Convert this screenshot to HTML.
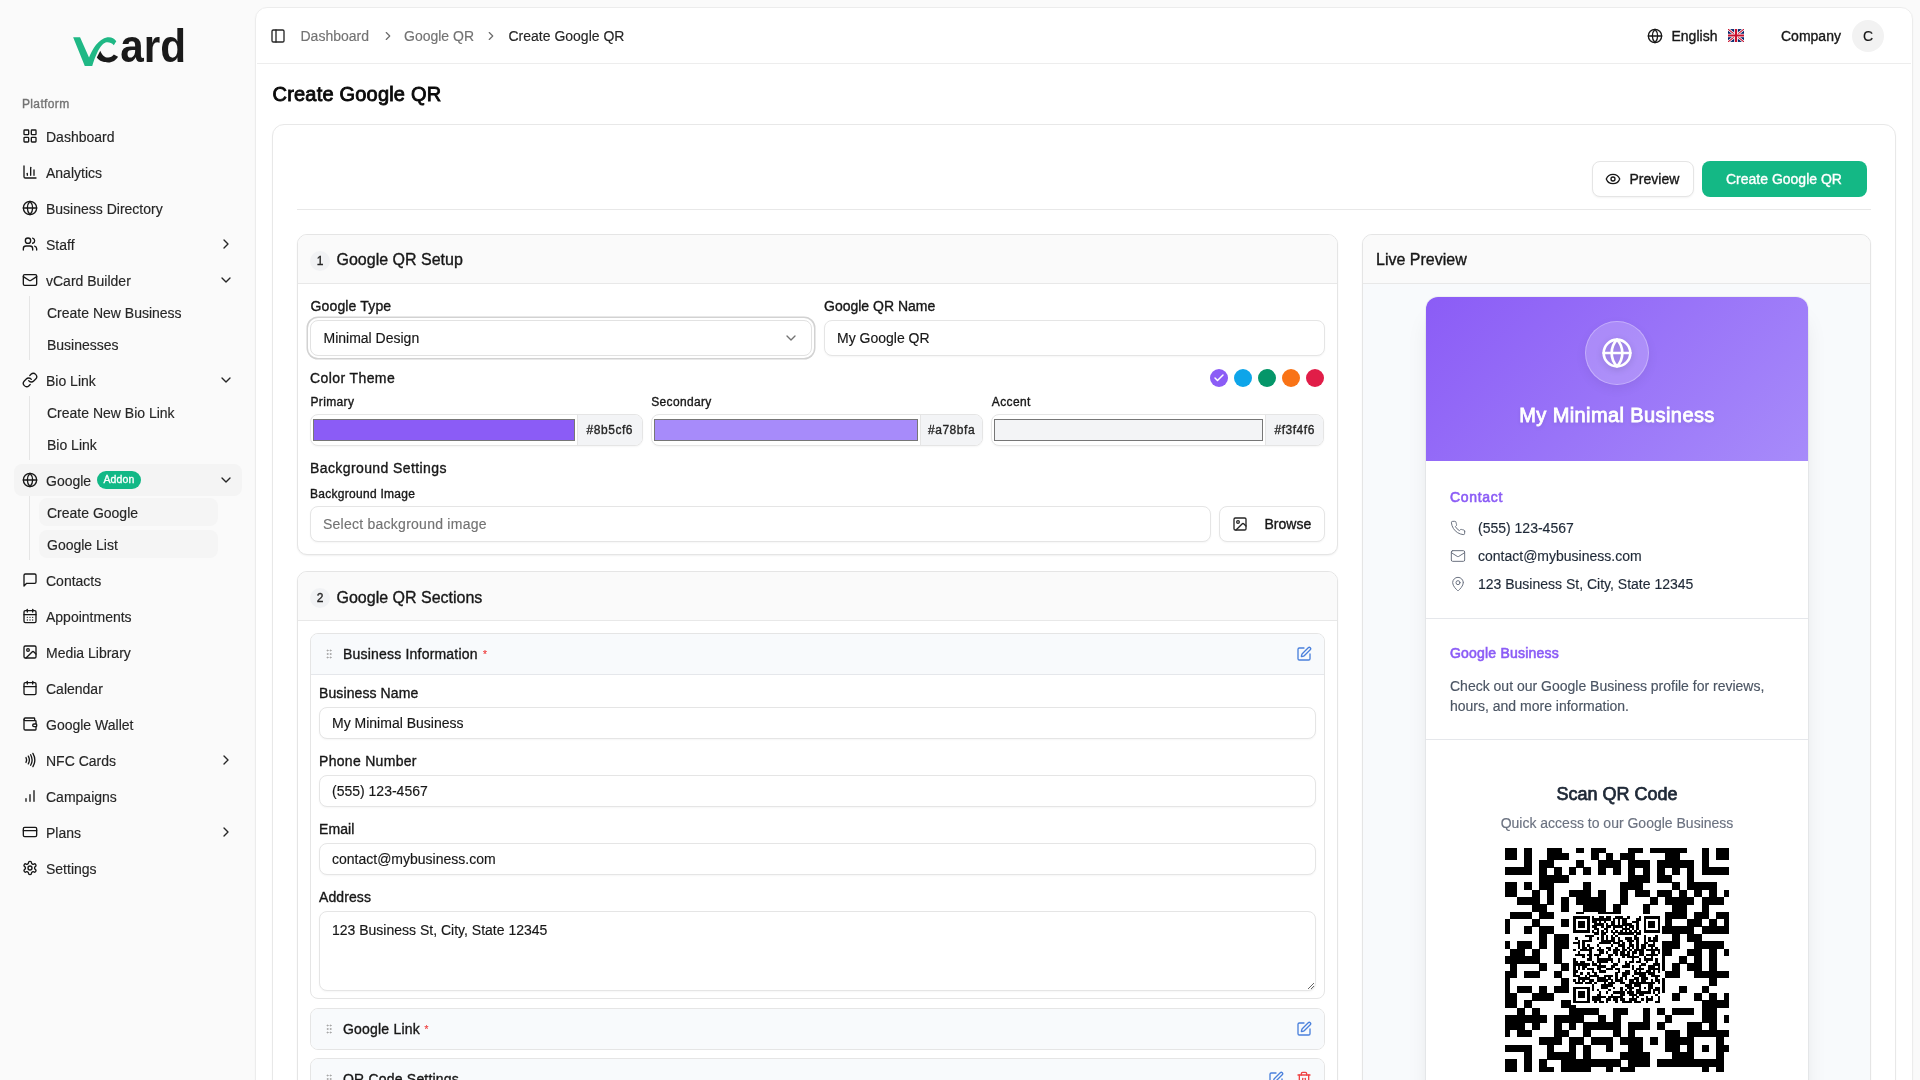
<!DOCTYPE html>
<html><head><meta charset="utf-8"><title>Create Google QR</title>
<style>
html,body{margin:0;padding:0;}
html{background:#fafafa;}body{width:1920px;height:1080px;overflow:hidden;position:relative;will-change:transform;font-family:"Liberation Sans",sans-serif;color:#171717;}
.t{position:absolute;white-space:nowrap;}
.b{position:absolute;box-sizing:border-box;}
.i{position:absolute;display:block;}
</style></head><body>

<svg class="i" style="left:60px;top:20px" width="140" height="56" viewBox="0 0 1920 768">
<path d="M505,515 L552,420 C575,478 610,514 660,514 C694,514 718,500 738,472 L796,503 C768,550 722,582 660,582 C598,582 540,565 505,515 Z" fill="#1a1a1a"/>
<path d="M180,235 L275,235 L398,515 C445,400 525,262 650,238 C700,230 742,250 772,292 L738,345 C712,318 682,306 650,306 C582,310 522,385 442,630 L340,630 Z" fill="#1fb885"/>

<text x="826" y="575" font-family="Liberation Sans" font-weight="700" font-size="640" fill="#1a1a1a" textLength="902" lengthAdjust="spacingAndGlyphs">ard</text>
</svg>
<div class="t" style="left:22px;top:97.84px;font-size:12px;line-height:12px;-webkit-text-stroke-width:0.35px;color:#737373;letter-spacing:0.35px;">Platform</div>
<div class="b" style="left:14px;top:464px;width:228px;height:32px;background:#f4f4f4;border-radius:8px;"></div>
<div class="b" style="left:39px;top:498px;width:179px;height:28px;background:#f5f5f5;border-radius:8px;"></div>
<div class="b" style="left:39px;top:530px;width:179px;height:28px;background:#f5f5f5;border-radius:8px;"></div>
<svg class="i" style="left:22px;top:128px;" width="16" height="16" viewBox="0 0 24 24" fill="none" stroke="#171717" stroke-width="2" stroke-linecap="round" stroke-linejoin="round"><rect width="7" height="7" x="3" y="3" rx="1"/><rect width="7" height="7" x="14" y="3" rx="1"/><rect width="7" height="7" x="14" y="14" rx="1"/><rect width="7" height="7" x="3" y="14" rx="1"/></svg>
<div class="t" style="left:46px;top:129.65px;font-size:14px;line-height:14px;-webkit-text-stroke-width:0.15px;color:#262626;">Dashboard</div>
<svg class="i" style="left:22px;top:164px;" width="16" height="16" viewBox="0 0 24 24" fill="none" stroke="#171717" stroke-width="2" stroke-linecap="round" stroke-linejoin="round"><path d="M3 3v16a2 2 0 0 0 2 2h16"/><path d="M18 17V9"/><path d="M13 17V5"/><path d="M8 17v-3"/></svg>
<div class="t" style="left:46px;top:165.65px;font-size:14px;line-height:14px;-webkit-text-stroke-width:0.15px;color:#262626;">Analytics</div>
<svg class="i" style="left:22px;top:200px;" width="16" height="16" viewBox="0 0 24 24" fill="none" stroke="#171717" stroke-width="2" stroke-linecap="round" stroke-linejoin="round"><circle cx="12" cy="12" r="10"/><path d="M12 2a14.5 14.5 0 0 0 0 20 14.5 14.5 0 0 0 0-20"/><path d="M2 12h20"/></svg>
<div class="t" style="left:46px;top:201.65px;font-size:14px;line-height:14px;-webkit-text-stroke-width:0.15px;color:#262626;">Business Directory</div>
<svg class="i" style="left:22px;top:236px;" width="16" height="16" viewBox="0 0 24 24" fill="none" stroke="#171717" stroke-width="2" stroke-linecap="round" stroke-linejoin="round"><path d="M16 21v-2a4 4 0 0 0-4-4H6a4 4 0 0 0-4 4v2"/><circle cx="9" cy="7" r="4"/><path d="M22 21v-2a4 4 0 0 0-3-3.87"/><path d="M16 3.13a4 4 0 0 1 0 7.75"/></svg>
<div class="t" style="left:46px;top:237.65px;font-size:14px;line-height:14px;-webkit-text-stroke-width:0.15px;color:#262626;">Staff</div>
<svg class="i" style="left:218px;top:236px;" width="16" height="16" viewBox="0 0 24 24" fill="none" stroke="#262626" stroke-width="2" stroke-linecap="round" stroke-linejoin="round"><path d="m9 18 6-6-6-6"/></svg>
<svg class="i" style="left:22px;top:272px;" width="16" height="16" viewBox="0 0 24 24" fill="none" stroke="#171717" stroke-width="2" stroke-linecap="round" stroke-linejoin="round"><rect width="20" height="16" x="2" y="4" rx="2"/><path d="m22 7-8.97 5.7a1.94 1.94 0 0 1-2.06 0L2 7"/></svg>
<div class="t" style="left:46px;top:273.65px;font-size:14px;line-height:14px;-webkit-text-stroke-width:0.15px;color:#262626;">vCard Builder</div>
<svg class="i" style="left:218px;top:272px;" width="16" height="16" viewBox="0 0 24 24" fill="none" stroke="#262626" stroke-width="2" stroke-linecap="round" stroke-linejoin="round"><path d="m6 9 6 6 6-6"/></svg>
<svg class="i" style="left:22px;top:372px;" width="16" height="16" viewBox="0 0 24 24" fill="none" stroke="#171717" stroke-width="2" stroke-linecap="round" stroke-linejoin="round"><path d="M10 13a5 5 0 0 0 7.54.54l3-3a5 5 0 0 0-7.07-7.07l-1.72 1.71"/><path d="M14 11a5 5 0 0 0-7.54-.54l-3 3a5 5 0 0 0 7.07 7.07l1.71-1.71"/></svg>
<div class="t" style="left:46px;top:373.65px;font-size:14px;line-height:14px;-webkit-text-stroke-width:0.15px;color:#262626;">Bio Link</div>
<svg class="i" style="left:218px;top:372px;" width="16" height="16" viewBox="0 0 24 24" fill="none" stroke="#262626" stroke-width="2" stroke-linecap="round" stroke-linejoin="round"><path d="m6 9 6 6 6-6"/></svg>
<svg class="i" style="left:22px;top:472px;" width="16" height="16" viewBox="0 0 24 24" fill="none" stroke="#171717" stroke-width="2" stroke-linecap="round" stroke-linejoin="round"><circle cx="12" cy="12" r="10"/><path d="M12 2a14.5 14.5 0 0 0 0 20 14.5 14.5 0 0 0 0-20"/><path d="M2 12h20"/></svg>
<div class="t" style="left:46px;top:473.65px;font-size:14px;line-height:14px;-webkit-text-stroke-width:0.15px;color:#262626;">Google</div>
<svg class="i" style="left:218px;top:472px;" width="16" height="16" viewBox="0 0 24 24" fill="none" stroke="#262626" stroke-width="2" stroke-linecap="round" stroke-linejoin="round"><path d="m6 9 6 6 6-6"/></svg>
<svg class="i" style="left:22px;top:572px;" width="16" height="16" viewBox="0 0 24 24" fill="none" stroke="#171717" stroke-width="2" stroke-linecap="round" stroke-linejoin="round"><path d="M21 15a2 2 0 0 1-2 2H7l-4 4V5a2 2 0 0 1 2-2h14a2 2 0 0 1 2 2z"/></svg>
<div class="t" style="left:46px;top:573.65px;font-size:14px;line-height:14px;-webkit-text-stroke-width:0.15px;color:#262626;">Contacts</div>
<svg class="i" style="left:22px;top:608px;" width="16" height="16" viewBox="0 0 24 24" fill="none" stroke="#171717" stroke-width="2" stroke-linecap="round" stroke-linejoin="round"><path d="M8 2v4"/><path d="M16 2v4"/><rect width="18" height="18" x="3" y="4" rx="2"/><path d="M3 10h18"/><path d="M8 14h.01"/><path d="M12 14h.01"/><path d="M16 14h.01"/><path d="M8 18h.01"/><path d="M12 18h.01"/><path d="M16 18h.01"/></svg>
<div class="t" style="left:46px;top:609.65px;font-size:14px;line-height:14px;-webkit-text-stroke-width:0.15px;color:#262626;">Appointments</div>
<svg class="i" style="left:22px;top:644px;" width="16" height="16" viewBox="0 0 24 24" fill="none" stroke="#171717" stroke-width="2" stroke-linecap="round" stroke-linejoin="round"><rect width="18" height="18" x="3" y="3" rx="2" ry="2"/><circle cx="9" cy="9" r="2"/><path d="m21 15-3.086-3.086a2 2 0 0 0-2.828 0L6 21"/></svg>
<div class="t" style="left:46px;top:645.65px;font-size:14px;line-height:14px;-webkit-text-stroke-width:0.15px;color:#262626;">Media Library</div>
<svg class="i" style="left:22px;top:680px;" width="16" height="16" viewBox="0 0 24 24" fill="none" stroke="#171717" stroke-width="2" stroke-linecap="round" stroke-linejoin="round"><path d="M8 2v4"/><path d="M16 2v4"/><rect width="18" height="18" x="3" y="4" rx="2"/><path d="M3 10h18"/></svg>
<div class="t" style="left:46px;top:681.65px;font-size:14px;line-height:14px;-webkit-text-stroke-width:0.15px;color:#262626;">Calendar</div>
<svg class="i" style="left:22px;top:716px;" width="16" height="16" viewBox="0 0 24 24" fill="none" stroke="#171717" stroke-width="2" stroke-linecap="round" stroke-linejoin="round"><path d="M19 7V4a1 1 0 0 0-1-1H5a2 2 0 0 0 0 4h15a1 1 0 0 1 1 1v4h-3a2 2 0 0 0 0 4h3a1 1 0 0 0 1-1v-2a1 1 0 0 0-1-1"/><path d="M3 5v14a2 2 0 0 0 2 2h15a1 1 0 0 0 1-1v-4"/></svg>
<div class="t" style="left:46px;top:717.65px;font-size:14px;line-height:14px;-webkit-text-stroke-width:0.15px;color:#262626;">Google Wallet</div>
<svg class="i" style="left:22px;top:752px;" width="16" height="16" viewBox="0 0 24 24" fill="none" stroke="#171717" stroke-width="2" stroke-linecap="round" stroke-linejoin="round"><path d="M6 8.32a7.43 7.43 0 0 1 0 7.36"/><path d="M9.46 6.21a11.76 11.76 0 0 1 0 11.58"/><path d="M12.91 4.1a15.91 15.91 0 0 1 .01 15.8"/><path d="M16.37 2a20.16 20.16 0 0 1 0 20"/></svg>
<div class="t" style="left:46px;top:753.65px;font-size:14px;line-height:14px;-webkit-text-stroke-width:0.15px;color:#262626;">NFC Cards</div>
<svg class="i" style="left:218px;top:752px;" width="16" height="16" viewBox="0 0 24 24" fill="none" stroke="#262626" stroke-width="2" stroke-linecap="round" stroke-linejoin="round"><path d="m9 18 6-6-6-6"/></svg>
<svg class="i" style="left:22px;top:788px;" width="16" height="16" viewBox="0 0 24 24" fill="none" stroke="#171717" stroke-width="2" stroke-linecap="round" stroke-linejoin="round"><path d="M12 20V10"/><path d="M18 20V4"/><path d="M6 20v-4"/></svg>
<div class="t" style="left:46px;top:789.65px;font-size:14px;line-height:14px;-webkit-text-stroke-width:0.15px;color:#262626;">Campaigns</div>
<svg class="i" style="left:22px;top:824px;" width="16" height="16" viewBox="0 0 24 24" fill="none" stroke="#171717" stroke-width="2" stroke-linecap="round" stroke-linejoin="round"><rect width="20" height="14" x="2" y="5" rx="2"/><line x1="2" x2="22" y1="10" y2="10"/></svg>
<div class="t" style="left:46px;top:825.65px;font-size:14px;line-height:14px;-webkit-text-stroke-width:0.15px;color:#262626;">Plans</div>
<svg class="i" style="left:218px;top:824px;" width="16" height="16" viewBox="0 0 24 24" fill="none" stroke="#262626" stroke-width="2" stroke-linecap="round" stroke-linejoin="round"><path d="m9 18 6-6-6-6"/></svg>
<svg class="i" style="left:22px;top:860px;" width="16" height="16" viewBox="0 0 24 24" fill="none" stroke="#171717" stroke-width="2" stroke-linecap="round" stroke-linejoin="round"><path d="M12.22 2h-.44a2 2 0 0 0-2 2v.18a2 2 0 0 1-1 1.73l-.43.25a2 2 0 0 1-2 0l-.15-.08a2 2 0 0 0-2.73.73l-.22.38a2 2 0 0 0 .73 2.73l.15.1a2 2 0 0 1 1 1.72v.51a2 2 0 0 1-1 1.74l-.15.09a2 2 0 0 0-.73 2.73l.22.38a2 2 0 0 0 2.73.73l.15-.08a2 2 0 0 1 2 0l.43.25a2 2 0 0 1 1 1.73V20a2 2 0 0 0 2 2h.44a2 2 0 0 0 2-2v-.18a2 2 0 0 1 1-1.73l.43-.25a2 2 0 0 1 2 0l.15.08a2 2 0 0 0 2.73-.73l.22-.39a2 2 0 0 0-.73-2.73l-.15-.08a2 2 0 0 1-1-1.74v-.5a2 2 0 0 1 1-1.74l.15-.09a2 2 0 0 0 .73-2.73l-.22-.38a2 2 0 0 0-2.73-.73l-.15.08a2 2 0 0 1-2 0l-.43-.25a2 2 0 0 1-1-1.73V4a2 2 0 0 0-2-2z"/><circle cx="12" cy="12" r="3"/></svg>
<div class="t" style="left:46px;top:861.65px;font-size:14px;line-height:14px;-webkit-text-stroke-width:0.15px;color:#262626;">Settings</div>
<div class="b" style="left:97px;top:471px;width:44px;height:18px;background:#12b886;border-radius:9px;"></div>
<div class="t" style="left:97.00px;width:44px;text-align:center;top:474.41px;font-size:10.5px;line-height:10.5px;-webkit-text-stroke-width:0.15px;color:#ffffff;-webkit-text-stroke-width:0.3px;letter-spacing:0.15px;">Addon</div>
<div class="b" style="left:29px;top:296px;width:1px;height:64px;background:#e5e5e5;"></div>
<div class="b" style="left:29px;top:396px;width:1px;height:64px;background:#e5e5e5;"></div>
<div class="b" style="left:29px;top:496px;width:1px;height:64px;background:#e5e5e5;"></div>
<div class="t" style="left:47px;top:305.65px;font-size:14px;line-height:14px;-webkit-text-stroke-width:0.15px;color:#262626;">Create New Business</div>
<div class="t" style="left:47px;top:337.65px;font-size:14px;line-height:14px;-webkit-text-stroke-width:0.15px;color:#262626;">Businesses</div>
<div class="t" style="left:47px;top:405.65px;font-size:14px;line-height:14px;-webkit-text-stroke-width:0.15px;color:#262626;">Create New Bio Link</div>
<div class="t" style="left:47px;top:437.65px;font-size:14px;line-height:14px;-webkit-text-stroke-width:0.15px;color:#262626;">Bio Link</div>
<div class="t" style="left:47px;top:505.65px;font-size:14px;line-height:14px;-webkit-text-stroke-width:0.15px;color:#262626;">Create Google</div>
<div class="t" style="left:47px;top:537.65px;font-size:14px;line-height:14px;-webkit-text-stroke-width:0.15px;color:#262626;">Google List</div>
<div class="b" style="left:255px;top:7px;width:1658px;height:1193px;background:#fff;border:1px solid #ececec;border-radius:12px;box-shadow:0 1px 2px rgba(0,0,0,0.04);"></div>
<div class="b" style="left:257px;top:63px;width:1654px;height:1px;background:#ededed;"></div>
<svg class="i" style="left:270px;top:28px;" width="16" height="16" viewBox="0 0 24 24" fill="none" stroke="#262626" stroke-width="2" stroke-linecap="round" stroke-linejoin="round"><rect width="18" height="18" x="3" y="3" rx="2"/><path d="M9 3v18"/></svg>
<div class="t" style="left:300.5px;top:29.15px;font-size:14px;line-height:14px;-webkit-text-stroke-width:0.15px;color:#737373;">Dashboard</div>
<svg class="i" style="left:381.2px;top:29px;" width="14" height="14" viewBox="0 0 24 24" fill="none" stroke="#6b6b6b" stroke-width="2" stroke-linecap="round" stroke-linejoin="round"><path d="m9 18 6-6-6-6"/></svg>
<div class="t" style="left:404px;top:29.15px;font-size:14px;line-height:14px;-webkit-text-stroke-width:0.15px;color:#737373;">Google QR</div>
<svg class="i" style="left:484.2px;top:29px;" width="14" height="14" viewBox="0 0 24 24" fill="none" stroke="#6b6b6b" stroke-width="2" stroke-linecap="round" stroke-linejoin="round"><path d="m9 18 6-6-6-6"/></svg>
<div class="t" style="left:508.5px;top:29.15px;font-size:14px;line-height:14px;-webkit-text-stroke-width:0.15px;color:#262626;">Create Google QR</div>
<svg class="i" style="left:1647px;top:28px;" width="16" height="16" viewBox="0 0 24 24" fill="none" stroke="#171717" stroke-width="2" stroke-linecap="round" stroke-linejoin="round"><circle cx="12" cy="12" r="10"/><path d="M12 2a14.5 14.5 0 0 0 0 20 14.5 14.5 0 0 0 0-20"/><path d="M2 12h20"/></svg>
<div class="t" style="left:1671.5px;top:29.15px;font-size:14px;line-height:14px;-webkit-text-stroke-width:0.35px;color:#171717;">English</div>
<svg class="i" style="left:1728px;top:29px" width="16" height="13" viewBox="0 0 60 48">
<rect width="60" height="48" fill="#012169"/>
<path d="M0 0L60 48M60 0L0 48" stroke="#fff" stroke-width="10"/>
<path d="M0 0L60 48M60 0L0 48" stroke="#C8102E" stroke-width="4"/>
<path d="M30 0v48M0 24h60" stroke="#fff" stroke-width="14"/>
<path d="M30 0v48M0 24h60" stroke="#C8102E" stroke-width="8"/>
</svg>
<div class="t" style="left:1781px;top:29.15px;font-size:14px;line-height:14px;-webkit-text-stroke-width:0.35px;color:#171717;">Company</div>
<div class="b" style="left:1852px;top:20px;width:32px;height:32px;background:#f2f2f2;border-radius:50%;"></div>
<div class="t" style="left:1852.00px;width:32px;text-align:center;top:29.15px;font-size:14px;line-height:14px;-webkit-text-stroke-width:0.15px;color:#171717;">C</div>
<div class="t" style="left:272.5px;top:84.07px;font-size:20px;line-height:20px;-webkit-text-stroke-width:0.15px;color:#0a0a0a;-webkit-text-stroke-width:0.85px;letter-spacing:0.2px;">Create Google QR</div>
<div class="b" style="left:272px;top:124px;width:1624px;height:1176px;background:#fff;border:1px solid #e8e8e8;border-radius:12px;box-shadow:0 1px 2px rgba(0,0,0,0.03);"></div>
<div class="b" style="left:1592px;top:161px;width:102px;height:36px;background:#fff;border:1px solid #e5e5e5;border-radius:8px;box-shadow:0 1px 2px rgba(0,0,0,0.05);"></div>
<svg class="i" style="left:1605px;top:171px;" width="16" height="16" viewBox="0 0 24 24" fill="none" stroke="#171717" stroke-width="2" stroke-linecap="round" stroke-linejoin="round"><path d="M2.062 12.348a1 1 0 0 1 0-.696 10.75 10.75 0 0 1 19.876 0 1 1 0 0 1 0 .696 10.75 10.75 0 0 1-19.876 0"/><circle cx="12" cy="12" r="3"/></svg>
<div class="t" style="left:1629.5px;top:172.15px;font-size:14px;line-height:14px;-webkit-text-stroke-width:0.35px;color:#171717;">Preview</div>
<div class="b" style="left:1702px;top:161px;width:165px;height:36px;background:#14b885;border-radius:8px;"></div>
<div class="t" style="left:1726px;top:172.15px;font-size:14px;line-height:14px;-webkit-text-stroke-width:0.35px;color:#ffffff;">Create Google QR</div>
<div class="b" style="left:297px;top:209px;width:1574px;height:1px;background:#e8e8e8;"></div>
<div class="b" style="left:297px;top:234px;width:1041px;height:321px;background:#fff;border:1px solid #e5e5e5;border-radius:10px;box-shadow:0 1px 2px rgba(0,0,0,0.06);overflow:hidden;"></div>
<div class="b" style="left:298px;top:235px;width:1039px;height:49px;background:#fafafa;border-radius:9px 9px 0 0;"></div>
<div class="b" style="left:298px;top:283px;width:1039px;height:1px;background:#e8e8e8;"></div>
<div class="b" style="left:310px;top:250.5px;width:20px;height:20.0px;background:#f1f2f4;border-radius:50%;"></div>
<div class="t" style="left:310.00px;width:20px;text-align:center;top:254.84px;font-size:12px;line-height:12px;-webkit-text-stroke-width:0.35px;color:#262626;">1</div>
<div class="t" style="left:336.5px;top:251.66px;font-size:16px;line-height:16px;-webkit-text-stroke-width:0.35px;color:#171717;">Google QR Setup</div>
<div class="t" style="left:310.5px;top:299.15px;font-size:14px;line-height:14px;-webkit-text-stroke-width:0.35px;color:#171717;letter-spacing:0.15px;">Google Type</div>
<div class="t" style="left:824px;top:299.15px;font-size:14px;line-height:14px;-webkit-text-stroke-width:0.35px;color:#171717;">Google QR Name</div>
<div class="b" style="left:310px;top:320px;width:502px;height:36px;background:#fff;border:1px solid #e2e2e2;border-radius:8px;box-shadow:0 0 0 2px #fff,0 0 0 3.5px #d2d2d2;"></div>
<div class="t" style="left:323.5px;top:331.15px;font-size:14px;line-height:14px;-webkit-text-stroke-width:0.15px;color:#171717;">Minimal Design</div>
<svg class="i" style="left:783px;top:330px;" width="16" height="16" viewBox="0 0 24 24" fill="none" stroke="#737373" stroke-width="2" stroke-linecap="round" stroke-linejoin="round"><path d="m6 9 6 6 6-6"/></svg>
<div class="b" style="left:824px;top:320px;width:501px;height:36px;background:#fff;border:1px solid #e5e5e5;border-radius:8px;box-shadow:0 1px 2px rgba(0,0,0,0.04);"></div>
<div class="t" style="left:837px;top:331.15px;font-size:14px;line-height:14px;-webkit-text-stroke-width:0.15px;color:#171717;">My Google QR</div>
<div class="t" style="left:310px;top:371.15px;font-size:14px;line-height:14px;-webkit-text-stroke-width:0.35px;color:#171717;letter-spacing:0.4px;">Color Theme</div>
<div class="b" style="left:1210px;top:369px;width:18px;height:18px;background:#8b5cf6;border-radius:50%;"></div>
<svg class="i" style="left:1213px;top:372px;" width="12" height="12" viewBox="0 0 24 24" fill="none" stroke="#ffffff" stroke-width="3" stroke-linecap="round" stroke-linejoin="round"><path d="M20 6 9 17l-5-5"/></svg>
<div class="b" style="left:1234px;top:369px;width:18px;height:18px;background:#0ea5e9;border-radius:50%;"></div>
<div class="b" style="left:1258px;top:369px;width:18px;height:18px;background:#059669;border-radius:50%;"></div>
<div class="b" style="left:1282px;top:369px;width:18px;height:18px;background:#f97316;border-radius:50%;"></div>
<div class="b" style="left:1306px;top:369px;width:18px;height:18px;background:#e11d48;border-radius:50%;"></div>
<div class="t" style="left:310.5px;top:395.84px;font-size:12px;line-height:12px;-webkit-text-stroke-width:0.35px;color:#171717;letter-spacing:0.35px;">Primary</div>
<div class="b" style="left:310px;top:414px;width:332.66999999999996px;height:32px;background:#fff;border:1px solid #e5e5e5;border-radius:8px;box-shadow:0 1px 2px rgba(0,0,0,0.04);overflow:hidden;"></div>
<div class="b" style="left:576.9699999999999px;top:415px;width:64.70000000000005px;height:30px;background:#f3f4f6;border-left:1px solid #e5e5e5;border-radius:0 7px 7px 0;"></div>
<div class="b" style="left:313px;top:419px;width:261.9699999999999px;height:22px;background:#8b5cf6;border:1px solid #767676;"></div>
<div class="t" style="left:576.97px;width:65.7px;text-align:center;top:423.84px;font-size:12px;line-height:12px;-webkit-text-stroke-width:0.35px;color:#262626;letter-spacing:0.55px;">#8b5cf6</div>
<div class="t" style="left:651.17px;top:395.84px;font-size:12px;line-height:12px;-webkit-text-stroke-width:0.35px;color:#171717;letter-spacing:0.35px;">Secondary</div>
<div class="b" style="left:650.67px;top:414px;width:332.6600000000001px;height:32px;background:#fff;border:1px solid #e5e5e5;border-radius:8px;box-shadow:0 1px 2px rgba(0,0,0,0.04);overflow:hidden;"></div>
<div class="b" style="left:919.83px;top:415px;width:62.5px;height:30px;background:#f3f4f6;border-left:1px solid #e5e5e5;border-radius:0 7px 7px 0;"></div>
<div class="b" style="left:653.67px;top:419px;width:264.1600000000001px;height:22px;background:#a78bfa;border:1px solid #767676;"></div>
<div class="t" style="left:919.83px;width:63.5px;text-align:center;top:423.84px;font-size:12px;line-height:12px;-webkit-text-stroke-width:0.35px;color:#262626;letter-spacing:0.55px;">#a78bfa</div>
<div class="t" style="left:991.83px;top:395.84px;font-size:12px;line-height:12px;-webkit-text-stroke-width:0.35px;color:#171717;letter-spacing:0.35px;">Accent</div>
<div class="b" style="left:991.33px;top:414px;width:332.66999999999996px;height:32px;background:#fff;border:1px solid #e5e5e5;border-radius:8px;box-shadow:0 1px 2px rgba(0,0,0,0.04);overflow:hidden;"></div>
<div class="b" style="left:1265.4px;top:415px;width:57.59999999999991px;height:30px;background:#f3f4f6;border-left:1px solid #e5e5e5;border-radius:0 7px 7px 0;"></div>
<div class="b" style="left:994.33px;top:419px;width:269.07000000000005px;height:22px;background:#f3f4f6;border:1px solid #767676;"></div>
<div class="t" style="left:1265.40px;width:58.6px;text-align:center;top:423.84px;font-size:12px;line-height:12px;-webkit-text-stroke-width:0.35px;color:#262626;letter-spacing:0.55px;">#f3f4f6</div>
<div class="t" style="left:310px;top:461.15px;font-size:14px;line-height:14px;-webkit-text-stroke-width:0.35px;color:#171717;letter-spacing:0.4px;">Background Settings</div>
<div class="t" style="left:310px;top:487.84px;font-size:12px;line-height:12px;-webkit-text-stroke-width:0.35px;color:#171717;letter-spacing:0.28px;">Background Image</div>
<div class="b" style="left:310px;top:506px;width:901px;height:36px;background:#fff;border:1px solid #e5e5e5;border-radius:8px;box-shadow:0 1px 2px rgba(0,0,0,0.04);"></div>
<div class="t" style="left:323px;top:517.15px;font-size:14px;line-height:14px;-webkit-text-stroke-width:0.15px;color:#737373;letter-spacing:0.25px;">Select background image</div>
<div class="b" style="left:1219px;top:506px;width:106px;height:36px;background:#fff;border:1px solid #e5e5e5;border-radius:8px;box-shadow:0 1px 2px rgba(0,0,0,0.04);"></div>
<svg class="i" style="left:1232px;top:516px;" width="16" height="16" viewBox="0 0 24 24" fill="none" stroke="#262626" stroke-width="2" stroke-linecap="round" stroke-linejoin="round"><rect width="18" height="18" x="3" y="3" rx="2" ry="2"/><circle cx="9" cy="9" r="2"/><path d="m21 15-3.086-3.086a2 2 0 0 0-2.828 0L6 21"/></svg>
<div class="t" style="left:1264.5px;top:517.15px;font-size:14px;line-height:14px;-webkit-text-stroke-width:0.35px;color:#171717;">Browse</div>
<div class="b" style="left:297px;top:571px;width:1041px;height:729px;background:#fff;border:1px solid #e5e5e5;border-radius:10px;box-shadow:0 1px 2px rgba(0,0,0,0.06);overflow:hidden;"></div>
<div class="b" style="left:298px;top:572px;width:1039px;height:49px;background:#fafafa;border-radius:9px 9px 0 0;"></div>
<div class="b" style="left:298px;top:620px;width:1039px;height:1px;background:#e8e8e8;"></div>
<div class="b" style="left:310px;top:587.5px;width:20px;height:20.0px;background:#f1f2f4;border-radius:50%;"></div>
<div class="t" style="left:310.00px;width:20px;text-align:center;top:591.84px;font-size:12px;line-height:12px;-webkit-text-stroke-width:0.35px;color:#262626;">2</div>
<div class="t" style="left:336.5px;top:590.16px;font-size:16px;line-height:16px;-webkit-text-stroke-width:0.35px;color:#171717;">Google QR Sections</div>
<div class="b" style="left:310px;top:633px;width:1015px;height:366px;background:#fff;border:1px solid #e5e5e5;border-radius:8px;overflow:hidden;"></div>
<div class="b" style="left:311px;top:634px;width:1013px;height:41px;background:#f8fafc;border-radius:7px 7px 0 0;"></div>
<div class="b" style="left:311px;top:674px;width:1013px;height:1px;background:#e5e7eb;"></div>
<svg class="i" style="left:323px;top:648px;" width="12" height="12" viewBox="0 0 24 24" fill="none" stroke="#a3a3a3" stroke-width="2" stroke-linecap="round" stroke-linejoin="round"><circle cx="9" cy="12" r="1"/><circle cx="9" cy="5" r="1"/><circle cx="9" cy="19" r="1"/><circle cx="15" cy="12" r="1"/><circle cx="15" cy="5" r="1"/><circle cx="15" cy="19" r="1"/></svg>
<div class="t" style="left:343px;top:647.15px;font-size:14px;line-height:14px;-webkit-text-stroke-width:0.35px;color:#171717;letter-spacing:0.2px;">Business Information</div>
<div class="t" style="left:483px;top:649.90px;font-size:10px;line-height:10px;color:#ef4444;-webkit-text-stroke-width:0.2px;">*</div>
<svg class="i" style="left:1296px;top:646px;" width="16" height="16" viewBox="0 0 24 24" fill="none" stroke="#4a80dc" stroke-width="2" stroke-linecap="round" stroke-linejoin="round"><path d="M12 3H5a2 2 0 0 0-2 2v14a2 2 0 0 0 2 2h14a2 2 0 0 0 2-2v-7"/><path d="M18.375 2.625a1 1 0 0 1 3 3l-9.013 9.014a2 2 0 0 1-.853.505l-2.873.84a.5.5 0 0 1-.62-.62l.84-2.873a2 2 0 0 1 .506-.852z"/></svg>
<div class="t" style="left:319px;top:686.15px;font-size:14px;line-height:14px;-webkit-text-stroke-width:0.35px;color:#171717;letter-spacing:0.1px;">Business Name</div>
<div class="b" style="left:319px;top:707px;width:997px;height:32px;background:#fff;border:1px solid #e5e5e5;border-radius:8px;box-shadow:0 1px 2px rgba(0,0,0,0.04);"></div>
<div class="t" style="left:332px;top:715.75px;font-size:14px;line-height:14px;-webkit-text-stroke-width:0.15px;color:#171717;">My Minimal Business</div>
<div class="t" style="left:319px;top:754.15px;font-size:14px;line-height:14px;-webkit-text-stroke-width:0.35px;color:#171717;letter-spacing:0.3px;">Phone Number</div>
<div class="b" style="left:319px;top:775px;width:997px;height:32px;background:#fff;border:1px solid #e5e5e5;border-radius:8px;box-shadow:0 1px 2px rgba(0,0,0,0.04);"></div>
<div class="t" style="left:332px;top:783.75px;font-size:14px;line-height:14px;-webkit-text-stroke-width:0.15px;color:#171717;">(555) 123-4567</div>
<div class="t" style="left:319px;top:822.15px;font-size:14px;line-height:14px;-webkit-text-stroke-width:0.35px;color:#171717;letter-spacing:0.1px;">Email</div>
<div class="b" style="left:319px;top:843px;width:997px;height:32px;background:#fff;border:1px solid #e5e5e5;border-radius:8px;box-shadow:0 1px 2px rgba(0,0,0,0.04);"></div>
<div class="t" style="left:332px;top:851.75px;font-size:14px;line-height:14px;-webkit-text-stroke-width:0.15px;color:#171717;">contact@mybusiness.com</div>
<div class="t" style="left:319px;top:890.15px;font-size:14px;line-height:14px;-webkit-text-stroke-width:0.35px;color:#171717;letter-spacing:0.1px;">Address</div>
<div class="b" style="left:319px;top:911px;width:997px;height:80px;background:#fff;border:1px solid #e5e5e5;border-radius:8px;box-shadow:0 1px 2px rgba(0,0,0,0.04);"></div>
<div class="t" style="left:332px;top:922.75px;font-size:14px;line-height:14px;-webkit-text-stroke-width:0.15px;color:#171717;">123 Business St, City, State 12345</div>
<svg class="i" style="left:1306.5px;top:982px" width="8" height="8" viewBox="0 0 8 8"><path d="M1 7L7 1M4 7L7 4" stroke="#555" stroke-width="0.9"/></svg>
<div class="b" style="left:310px;top:1008px;width:1015px;height:42px;background:#fff;border:1px solid #e5e5e5;border-radius:8px;overflow:hidden;"></div>
<div class="b" style="left:311px;top:1009px;width:1013px;height:40px;background:#f8fafc;border-radius:7px;"></div>
<svg class="i" style="left:323px;top:1023px;" width="12" height="12" viewBox="0 0 24 24" fill="none" stroke="#a3a3a3" stroke-width="2" stroke-linecap="round" stroke-linejoin="round"><circle cx="9" cy="12" r="1"/><circle cx="9" cy="5" r="1"/><circle cx="9" cy="19" r="1"/><circle cx="15" cy="12" r="1"/><circle cx="15" cy="5" r="1"/><circle cx="15" cy="19" r="1"/></svg>
<div class="t" style="left:343px;top:1022.15px;font-size:14px;line-height:14px;-webkit-text-stroke-width:0.35px;color:#171717;letter-spacing:0.2px;">Google Link</div>
<div class="t" style="left:424.5px;top:1024.90px;font-size:10px;line-height:10px;color:#ef4444;-webkit-text-stroke-width:0.2px;">*</div>
<svg class="i" style="left:1296px;top:1021px;" width="16" height="16" viewBox="0 0 24 24" fill="none" stroke="#4a80dc" stroke-width="2" stroke-linecap="round" stroke-linejoin="round"><path d="M12 3H5a2 2 0 0 0-2 2v14a2 2 0 0 0 2 2h14a2 2 0 0 0 2-2v-7"/><path d="M18.375 2.625a1 1 0 0 1 3 3l-9.013 9.014a2 2 0 0 1-.853.505l-2.873.84a.5.5 0 0 1-.62-.62l.84-2.873a2 2 0 0 1 .506-.852z"/></svg>
<div class="b" style="left:310px;top:1058px;width:1015px;height:242px;background:#fff;border:1px solid #e5e5e5;border-radius:8px;overflow:hidden;"></div>
<div class="b" style="left:311px;top:1059px;width:1013px;height:41px;background:#f8fafc;border-radius:7px 7px 0 0;"></div>
<div class="b" style="left:311px;top:1099px;width:1013px;height:1px;background:#e5e7eb;"></div>
<svg class="i" style="left:323px;top:1073px;" width="12" height="12" viewBox="0 0 24 24" fill="none" stroke="#a3a3a3" stroke-width="2" stroke-linecap="round" stroke-linejoin="round"><circle cx="9" cy="12" r="1"/><circle cx="9" cy="5" r="1"/><circle cx="9" cy="19" r="1"/><circle cx="15" cy="12" r="1"/><circle cx="15" cy="5" r="1"/><circle cx="15" cy="19" r="1"/></svg>
<div class="t" style="left:343px;top:1072.15px;font-size:14px;line-height:14px;-webkit-text-stroke-width:0.35px;color:#171717;letter-spacing:0.2px;">QR Code Settings</div>
<svg class="i" style="left:1268px;top:1071px;" width="16" height="16" viewBox="0 0 24 24" fill="none" stroke="#4a80dc" stroke-width="2" stroke-linecap="round" stroke-linejoin="round"><path d="M12 3H5a2 2 0 0 0-2 2v14a2 2 0 0 0 2 2h14a2 2 0 0 0 2-2v-7"/><path d="M18.375 2.625a1 1 0 0 1 3 3l-9.013 9.014a2 2 0 0 1-.853.505l-2.873.84a.5.5 0 0 1-.62-.62l.84-2.873a2 2 0 0 1 .506-.852z"/></svg>
<svg class="i" style="left:1296px;top:1071px;" width="16" height="16" viewBox="0 0 24 24" fill="none" stroke="#ef4444" stroke-width="2" stroke-linecap="round" stroke-linejoin="round"><path d="M3 6h18"/><path d="M19 6v14c0 1-1 2-2 2H7c-1 0-2-1-2-2V6"/><path d="M8 6V4c0-1 1-2 2-2h4c1 0 2 1 2 2v2"/><line x1="10" x2="10" y1="11" y2="17"/><line x1="14" x2="14" y1="11" y2="17"/></svg>
<div class="b" style="left:1362px;top:234px;width:509px;height:1066px;background:#f8fafc;border:1px solid #e5e5e5;border-radius:10px;box-shadow:0 1px 2px rgba(0,0,0,0.06);overflow:hidden;"></div>
<div class="b" style="left:1363px;top:235px;width:507px;height:49px;background:#fafafa;border-radius:9px 9px 0 0;"></div>
<div class="b" style="left:1363px;top:283px;width:507px;height:1px;background:#e8e8e8;"></div>
<div class="t" style="left:1376px;top:252.46px;font-size:16px;line-height:16px;-webkit-text-stroke-width:0.35px;color:#171717;">Live Preview</div>
<div class="b" style="left:1426px;top:297px;width:382px;height:1003px;background:#fff;border-radius:12px;box-shadow:0 0 0 1px rgba(0,0,0,0.04),0 20px 25px -5px rgba(0,0,0,0.1),0 8px 10px -6px rgba(0,0,0,0.1);overflow:hidden;"></div>
<div class="b" style="left:1426px;top:297px;width:382px;height:164px;background:linear-gradient(135deg,#8b5cf6 0%,#a78bfa 100%);border-radius:12px 12px 0 0;"></div>
<div class="b" style="left:1585px;top:321px;width:64px;height:64px;background:rgba(255,255,255,0.2);border:1px solid rgba(255,255,255,0.3);border-radius:50%;box-shadow:0 4px 12px rgba(0,0,0,0.06);"></div>
<svg class="i" style="left:1601px;top:337px;filter:drop-shadow(0 2px 3px rgba(0,0,0,0.15));" width="32" height="32" viewBox="0 0 24 24" fill="none" stroke="#ffffff" stroke-width="2" stroke-linecap="round" stroke-linejoin="round"><circle cx="12" cy="12" r="10"/><path d="M12 2a14.5 14.5 0 0 0 0 20 14.5 14.5 0 0 0 0-20"/><path d="M2 12h20"/></svg>
<div class="t" style="left:1467.00px;width:300px;text-align:center;top:405.07px;font-size:20px;line-height:20px;-webkit-text-stroke-width:0.15px;color:#ffffff;-webkit-text-stroke-width:0.85px;letter-spacing:0.4px;text-shadow:0 2px 4px rgba(0,0,0,0.12);">My Minimal Business</div>
<div class="t" style="left:1450px;top:489.65px;font-size:14px;line-height:14px;-webkit-text-stroke-width:0.15px;color:#8b5cf6;-webkit-text-stroke-width:0.6px;letter-spacing:0.7px;">Contact</div>
<svg class="i" style="left:1450px;top:520px;" width="16" height="16" viewBox="0 0 24 24" fill="none" stroke="#6b7280" stroke-width="1.5" stroke-linecap="round" stroke-linejoin="round"><path d="M22 16.92v3a2 2 0 0 1-2.18 2 19.79 19.79 0 0 1-8.63-3.07 19.5 19.5 0 0 1-6-6 19.79 19.79 0 0 1-3.07-8.67A2 2 0 0 1 4.11 2h3a2 2 0 0 1 2 1.72 12.84 12.84 0 0 0 .7 2.81 2 2 0 0 1-.45 2.11L8.09 9.91a16 16 0 0 0 6 6l1.27-1.27a2 2 0 0 1 2.11-.45 12.84 12.84 0 0 0 2.81.7A2 2 0 0 1 22 16.92z"/></svg>
<div class="t" style="left:1478px;top:521.05px;font-size:14px;line-height:14px;-webkit-text-stroke-width:0.15px;color:#1f2937;">(555) 123-4567</div>
<svg class="i" style="left:1450px;top:548px;" width="16" height="16" viewBox="0 0 24 24" fill="none" stroke="#6b7280" stroke-width="1.5" stroke-linecap="round" stroke-linejoin="round"><rect width="20" height="16" x="2" y="4" rx="2"/><path d="m22 7-8.97 5.7a1.94 1.94 0 0 1-2.06 0L2 7"/></svg>
<div class="t" style="left:1478px;top:549.05px;font-size:14px;line-height:14px;-webkit-text-stroke-width:0.15px;color:#1f2937;">contact@mybusiness.com</div>
<svg class="i" style="left:1450px;top:576px;" width="16" height="16" viewBox="0 0 24 24" fill="none" stroke="#6b7280" stroke-width="1.5" stroke-linecap="round" stroke-linejoin="round"><path d="M20 10c0 4.993-5.539 10.193-7.399 11.799a1 1 0 0 1-1.202 0C9.539 20.193 4 14.993 4 10a8 8 0 0 1 16 0"/><circle cx="12" cy="10" r="3"/></svg>
<div class="t" style="left:1478px;top:577.05px;font-size:14px;line-height:14px;-webkit-text-stroke-width:0.15px;color:#1f2937;">123 Business St, City, State 12345</div>
<div class="b" style="left:1426px;top:618px;width:382px;height:1px;background:#e5e7eb;"></div>
<div class="t" style="left:1450px;top:646.45px;font-size:14px;line-height:14px;-webkit-text-stroke-width:0.15px;color:#8b5cf6;-webkit-text-stroke-width:0.6px;letter-spacing:0.2px;">Google Business</div>
<div class="t" style="left:1450px;top:678.65px;font-size:14px;line-height:14px;-webkit-text-stroke-width:0.15px;color:#4b5563;">Check out our Google Business profile for reviews,</div>
<div class="t" style="left:1450px;top:698.65px;font-size:14px;line-height:14px;-webkit-text-stroke-width:0.15px;color:#4b5563;">hours, and more information.</div>
<div class="b" style="left:1426px;top:739px;width:382px;height:1px;background:#e5e7eb;"></div>
<div class="t" style="left:1467.00px;width:300px;text-align:center;top:784.76px;font-size:18px;line-height:18px;-webkit-text-stroke-width:0.15px;color:#1f2937;-webkit-text-stroke-width:0.75px;letter-spacing:0px;">Scan QR Code</div>
<div class="t" style="left:1467.00px;width:300px;text-align:center;top:815.65px;font-size:14px;line-height:14px;-webkit-text-stroke-width:0.15px;color:#6b7280;">Quick access to our Google Business</div>
<svg class="i" style="left:1505px;top:848px" width="224" height="224" viewBox="0 0 224 224"><rect width="224" height="224" fill="#fff"/><g fill="#000" shape-rendering="crispEdges"><rect x="-2.70" y="-2.70" width="15.06" height="7.68"/><rect x="19.44" y="-2.70" width="7.68" height="7.68"/><rect x="41.58" y="-2.70" width="15.06" height="7.68"/><rect x="71.10" y="-2.70" width="7.68" height="7.68"/><rect x="85.86" y="-2.70" width="15.06" height="7.68"/><rect x="122.76" y="-2.70" width="15.06" height="7.68"/><rect x="144.90" y="-2.70" width="37.20" height="7.68"/><rect x="196.56" y="-2.70" width="7.68" height="7.68"/><rect x="211.32" y="-2.70" width="15.06" height="7.68"/><rect x="-2.70" y="4.68" width="15.06" height="7.68"/><rect x="19.44" y="4.68" width="7.68" height="7.68"/><rect x="41.58" y="4.68" width="22.44" height="7.68"/><rect x="85.86" y="4.68" width="7.68" height="7.68"/><rect x="100.62" y="4.68" width="7.68" height="7.68"/><rect x="115.38" y="4.68" width="15.06" height="7.68"/><rect x="159.66" y="4.68" width="15.06" height="7.68"/><rect x="196.56" y="4.68" width="7.68" height="7.68"/><rect x="211.32" y="4.68" width="15.06" height="7.68"/><rect x="19.44" y="12.06" width="7.68" height="7.68"/><rect x="34.20" y="12.06" width="15.06" height="7.68"/><rect x="71.10" y="12.06" width="7.68" height="7.68"/><rect x="93.24" y="12.06" width="22.44" height="7.68"/><rect x="122.76" y="12.06" width="22.44" height="7.68"/><rect x="152.28" y="12.06" width="37.20" height="7.68"/><rect x="196.56" y="12.06" width="7.68" height="7.68"/><rect x="-2.70" y="19.44" width="29.82" height="7.68"/><rect x="34.20" y="19.44" width="7.68" height="7.68"/><rect x="48.96" y="19.44" width="7.68" height="7.68"/><rect x="63.72" y="19.44" width="7.68" height="7.68"/><rect x="78.48" y="19.44" width="7.68" height="7.68"/><rect x="93.24" y="19.44" width="7.68" height="7.68"/><rect x="108.00" y="19.44" width="7.68" height="7.68"/><rect x="122.76" y="19.44" width="7.68" height="7.68"/><rect x="137.52" y="19.44" width="7.68" height="7.68"/><rect x="152.28" y="19.44" width="7.68" height="7.68"/><rect x="167.04" y="19.44" width="7.68" height="7.68"/><rect x="181.80" y="19.44" width="7.68" height="7.68"/><rect x="196.56" y="19.44" width="29.82" height="7.68"/><rect x="34.20" y="26.82" width="29.82" height="7.68"/><rect x="122.76" y="26.82" width="22.44" height="7.68"/><rect x="152.28" y="26.82" width="15.06" height="7.68"/><rect x="181.80" y="26.82" width="7.68" height="7.68"/><rect x="-2.70" y="34.20" width="15.06" height="7.68"/><rect x="19.44" y="34.20" width="7.68" height="7.68"/><rect x="34.20" y="34.20" width="15.06" height="7.68"/><rect x="78.48" y="34.20" width="7.68" height="7.68"/><rect x="115.38" y="34.20" width="22.44" height="7.68"/><rect x="167.04" y="34.20" width="7.68" height="7.68"/><rect x="181.80" y="34.20" width="29.82" height="7.68"/><rect x="-2.70" y="41.58" width="15.06" height="7.68"/><rect x="26.82" y="41.58" width="7.68" height="7.68"/><rect x="41.58" y="41.58" width="7.68" height="7.68"/><rect x="63.72" y="41.58" width="22.44" height="7.68"/><rect x="93.24" y="41.58" width="7.68" height="7.68"/><rect x="115.38" y="41.58" width="7.68" height="7.68"/><rect x="130.14" y="41.58" width="15.06" height="7.68"/><rect x="152.28" y="41.58" width="15.06" height="7.68"/><rect x="174.42" y="41.58" width="7.68" height="7.68"/><rect x="189.18" y="41.58" width="7.68" height="7.68"/><rect x="203.94" y="41.58" width="7.68" height="7.68"/><rect x="218.70" y="41.58" width="7.68" height="7.68"/><rect x="12.06" y="48.96" width="22.44" height="7.68"/><rect x="41.58" y="48.96" width="7.68" height="7.68"/><rect x="56.34" y="48.96" width="7.68" height="7.68"/><rect x="71.10" y="48.96" width="29.82" height="7.68"/><rect x="115.38" y="48.96" width="7.68" height="7.68"/><rect x="144.90" y="48.96" width="7.68" height="7.68"/><rect x="159.66" y="48.96" width="29.82" height="7.68"/><rect x="196.56" y="48.96" width="22.44" height="7.68"/><rect x="26.82" y="56.34" width="15.06" height="7.68"/><rect x="56.34" y="56.34" width="7.68" height="7.68"/><rect x="78.48" y="56.34" width="22.44" height="7.68"/><rect x="108.00" y="56.34" width="7.68" height="7.68"/><rect x="137.52" y="56.34" width="7.68" height="7.68"/><rect x="167.04" y="56.34" width="15.06" height="7.68"/><rect x="196.56" y="56.34" width="7.68" height="7.68"/><rect x="4.68" y="63.72" width="22.44" height="7.68"/><rect x="34.20" y="63.72" width="15.06" height="7.68"/><rect x="71.10" y="63.72" width="7.68" height="7.68"/><rect x="93.24" y="63.72" width="22.44" height="7.68"/><rect x="137.52" y="63.72" width="7.68" height="7.68"/><rect x="159.66" y="63.72" width="22.44" height="7.68"/><rect x="189.18" y="63.72" width="15.06" height="7.68"/><rect x="211.32" y="63.72" width="15.06" height="7.68"/><rect x="-2.70" y="71.10" width="7.68" height="7.68"/><rect x="26.82" y="71.10" width="7.68" height="7.68"/><rect x="56.34" y="71.10" width="7.68" height="7.68"/><rect x="159.66" y="71.10" width="7.68" height="7.68"/><rect x="181.80" y="71.10" width="15.06" height="7.68"/><rect x="203.94" y="71.10" width="7.68" height="7.68"/><rect x="218.70" y="71.10" width="7.68" height="7.68"/><rect x="-2.70" y="78.48" width="7.68" height="7.68"/><rect x="19.44" y="78.48" width="7.68" height="7.68"/><rect x="34.20" y="78.48" width="15.06" height="7.68"/><rect x="152.28" y="78.48" width="37.20" height="7.68"/><rect x="196.56" y="78.48" width="29.82" height="7.68"/><rect x="34.20" y="85.86" width="7.68" height="7.68"/><rect x="48.96" y="85.86" width="15.06" height="7.68"/><rect x="167.04" y="85.86" width="7.68" height="7.68"/><rect x="181.80" y="85.86" width="15.06" height="7.68"/><rect x="-2.70" y="93.24" width="7.68" height="7.68"/><rect x="12.06" y="93.24" width="15.06" height="7.68"/><rect x="34.20" y="93.24" width="7.68" height="7.68"/><rect x="48.96" y="93.24" width="15.06" height="7.68"/><rect x="152.28" y="93.24" width="22.44" height="7.68"/><rect x="189.18" y="93.24" width="29.82" height="7.68"/><rect x="4.68" y="100.62" width="15.06" height="7.68"/><rect x="26.82" y="100.62" width="7.68" height="7.68"/><rect x="48.96" y="100.62" width="7.68" height="7.68"/><rect x="152.28" y="100.62" width="15.06" height="7.68"/><rect x="181.80" y="100.62" width="15.06" height="7.68"/><rect x="203.94" y="100.62" width="7.68" height="7.68"/><rect x="218.70" y="100.62" width="7.68" height="7.68"/><rect x="-2.70" y="108.00" width="37.20" height="7.68"/><rect x="48.96" y="108.00" width="7.68" height="7.68"/><rect x="152.28" y="108.00" width="7.68" height="7.68"/><rect x="174.42" y="108.00" width="7.68" height="7.68"/><rect x="189.18" y="108.00" width="7.68" height="7.68"/><rect x="203.94" y="108.00" width="7.68" height="7.68"/><rect x="4.68" y="115.38" width="7.68" height="7.68"/><rect x="34.20" y="115.38" width="7.68" height="7.68"/><rect x="56.34" y="115.38" width="7.68" height="7.68"/><rect x="152.28" y="115.38" width="7.68" height="7.68"/><rect x="167.04" y="115.38" width="7.68" height="7.68"/><rect x="181.80" y="115.38" width="15.06" height="7.68"/><rect x="203.94" y="115.38" width="7.68" height="7.68"/><rect x="-2.70" y="122.76" width="15.06" height="7.68"/><rect x="19.44" y="122.76" width="15.06" height="7.68"/><rect x="48.96" y="122.76" width="7.68" height="7.68"/><rect x="159.66" y="122.76" width="15.06" height="7.68"/><rect x="189.18" y="122.76" width="37.20" height="7.68"/><rect x="-2.70" y="130.14" width="7.68" height="7.68"/><rect x="56.34" y="130.14" width="7.68" height="7.68"/><rect x="152.28" y="130.14" width="7.68" height="7.68"/><rect x="203.94" y="130.14" width="7.68" height="7.68"/><rect x="-2.70" y="137.52" width="7.68" height="7.68"/><rect x="12.06" y="137.52" width="15.06" height="7.68"/><rect x="34.20" y="137.52" width="7.68" height="7.68"/><rect x="48.96" y="137.52" width="15.06" height="7.68"/><rect x="152.28" y="137.52" width="7.68" height="7.68"/><rect x="174.42" y="137.52" width="7.68" height="7.68"/><rect x="196.56" y="137.52" width="7.68" height="7.68"/><rect x="-2.70" y="144.90" width="15.06" height="7.68"/><rect x="26.82" y="144.90" width="22.44" height="7.68"/><rect x="167.04" y="144.90" width="7.68" height="7.68"/><rect x="189.18" y="144.90" width="7.68" height="7.68"/><rect x="203.94" y="144.90" width="7.68" height="7.68"/><rect x="218.70" y="144.90" width="7.68" height="7.68"/><rect x="-2.70" y="152.28" width="15.06" height="7.68"/><rect x="19.44" y="152.28" width="7.68" height="7.68"/><rect x="56.34" y="152.28" width="15.06" height="7.68"/><rect x="196.56" y="152.28" width="29.82" height="7.68"/><rect x="12.06" y="159.66" width="7.68" height="7.68"/><rect x="26.82" y="159.66" width="7.68" height="7.68"/><rect x="63.72" y="159.66" width="29.82" height="7.68"/><rect x="108.00" y="159.66" width="15.06" height="7.68"/><rect x="137.52" y="159.66" width="7.68" height="7.68"/><rect x="152.28" y="159.66" width="7.68" height="7.68"/><rect x="167.04" y="159.66" width="22.44" height="7.68"/><rect x="196.56" y="159.66" width="15.06" height="7.68"/><rect x="-2.70" y="167.04" width="44.58" height="7.68"/><rect x="48.96" y="167.04" width="29.82" height="7.68"/><rect x="93.24" y="167.04" width="7.68" height="7.68"/><rect x="108.00" y="167.04" width="7.68" height="7.68"/><rect x="137.52" y="167.04" width="7.68" height="7.68"/><rect x="159.66" y="167.04" width="7.68" height="7.68"/><rect x="196.56" y="167.04" width="15.06" height="7.68"/><rect x="218.70" y="167.04" width="7.68" height="7.68"/><rect x="-2.70" y="174.42" width="22.44" height="7.68"/><rect x="26.82" y="174.42" width="7.68" height="7.68"/><rect x="48.96" y="174.42" width="7.68" height="7.68"/><rect x="63.72" y="174.42" width="7.68" height="7.68"/><rect x="78.48" y="174.42" width="37.20" height="7.68"/><rect x="122.76" y="174.42" width="22.44" height="7.68"/><rect x="152.28" y="174.42" width="7.68" height="7.68"/><rect x="181.80" y="174.42" width="15.06" height="7.68"/><rect x="203.94" y="174.42" width="7.68" height="7.68"/><rect x="-2.70" y="181.80" width="7.68" height="7.68"/><rect x="12.06" y="181.80" width="15.06" height="7.68"/><rect x="48.96" y="181.80" width="15.06" height="7.68"/><rect x="78.48" y="181.80" width="7.68" height="7.68"/><rect x="108.00" y="181.80" width="7.68" height="7.68"/><rect x="122.76" y="181.80" width="7.68" height="7.68"/><rect x="159.66" y="181.80" width="15.06" height="7.68"/><rect x="181.80" y="181.80" width="44.58" height="7.68"/><rect x="34.20" y="189.18" width="22.44" height="7.68"/><rect x="63.72" y="189.18" width="15.06" height="7.68"/><rect x="85.86" y="189.18" width="22.44" height="7.68"/><rect x="115.38" y="189.18" width="22.44" height="7.68"/><rect x="144.90" y="189.18" width="7.68" height="7.68"/><rect x="159.66" y="189.18" width="29.82" height="7.68"/><rect x="211.32" y="189.18" width="7.68" height="7.68"/><rect x="-2.70" y="196.56" width="29.82" height="7.68"/><rect x="41.58" y="196.56" width="7.68" height="7.68"/><rect x="63.72" y="196.56" width="7.68" height="7.68"/><rect x="78.48" y="196.56" width="7.68" height="7.68"/><rect x="100.62" y="196.56" width="7.68" height="7.68"/><rect x="122.76" y="196.56" width="15.06" height="7.68"/><rect x="159.66" y="196.56" width="15.06" height="7.68"/><rect x="181.80" y="196.56" width="7.68" height="7.68"/><rect x="196.56" y="196.56" width="7.68" height="7.68"/><rect x="211.32" y="196.56" width="15.06" height="7.68"/><rect x="19.44" y="203.94" width="7.68" height="7.68"/><rect x="41.58" y="203.94" width="29.82" height="7.68"/><rect x="78.48" y="203.94" width="7.68" height="7.68"/><rect x="115.38" y="203.94" width="29.82" height="7.68"/><rect x="167.04" y="203.94" width="22.44" height="7.68"/><rect x="211.32" y="203.94" width="7.68" height="7.68"/><rect x="-2.70" y="211.32" width="15.06" height="7.68"/><rect x="19.44" y="211.32" width="7.68" height="7.68"/><rect x="34.20" y="211.32" width="7.68" height="7.68"/><rect x="56.34" y="211.32" width="59.34" height="7.68"/><rect x="122.76" y="211.32" width="22.44" height="7.68"/><rect x="152.28" y="211.32" width="66.72" height="7.68"/><rect x="-2.70" y="218.70" width="15.06" height="7.68"/><rect x="19.44" y="218.70" width="7.68" height="7.68"/><rect x="34.20" y="218.70" width="15.06" height="7.68"/><rect x="56.34" y="218.70" width="29.82" height="7.68"/><rect x="100.62" y="218.70" width="7.68" height="7.68"/><rect x="115.38" y="218.70" width="15.06" height="7.68"/><rect x="196.56" y="218.70" width="7.68" height="7.68"/><rect x="211.32" y="218.70" width="7.68" height="7.68"/></g><rect x="66.0" y="66.0" width="91" height="91" fill="#fff"/><g fill="#000" shape-rendering="crispEdges"><rect x="68.00" y="68.00" width="16.61" height="2.50"/><rect x="86.81" y="68.00" width="2.50" height="2.50"/><rect x="93.86" y="68.00" width="4.85" height="2.50"/><rect x="100.92" y="68.00" width="4.85" height="2.50"/><rect x="110.32" y="68.00" width="7.20" height="2.50"/><rect x="122.08" y="68.00" width="2.50" height="2.50"/><rect x="133.84" y="68.00" width="2.50" height="2.50"/><rect x="138.54" y="68.00" width="16.61" height="2.50"/><rect x="68.00" y="70.35" width="2.50" height="2.50"/><rect x="82.11" y="70.35" width="2.50" height="2.50"/><rect x="86.81" y="70.35" width="18.96" height="2.50"/><rect x="107.97" y="70.35" width="2.50" height="2.50"/><rect x="112.68" y="70.35" width="2.50" height="2.50"/><rect x="117.38" y="70.35" width="4.85" height="2.50"/><rect x="131.49" y="70.35" width="4.85" height="2.50"/><rect x="138.54" y="70.35" width="2.50" height="2.50"/><rect x="152.65" y="70.35" width="2.50" height="2.50"/><rect x="68.00" y="72.70" width="2.50" height="2.50"/><rect x="72.70" y="72.70" width="7.20" height="2.50"/><rect x="82.11" y="72.70" width="2.50" height="2.50"/><rect x="86.81" y="72.70" width="4.85" height="2.50"/><rect x="93.86" y="72.70" width="2.50" height="2.50"/><rect x="98.57" y="72.70" width="2.50" height="2.50"/><rect x="105.62" y="72.70" width="4.85" height="2.50"/><rect x="112.68" y="72.70" width="2.50" height="2.50"/><rect x="117.38" y="72.70" width="4.85" height="2.50"/><rect x="126.78" y="72.70" width="7.20" height="2.50"/><rect x="138.54" y="72.70" width="2.50" height="2.50"/><rect x="143.24" y="72.70" width="7.20" height="2.50"/><rect x="152.65" y="72.70" width="2.50" height="2.50"/><rect x="68.00" y="75.05" width="2.50" height="2.50"/><rect x="72.70" y="75.05" width="7.20" height="2.50"/><rect x="82.11" y="75.05" width="2.50" height="2.50"/><rect x="89.16" y="75.05" width="9.56" height="2.50"/><rect x="100.92" y="75.05" width="2.50" height="2.50"/><rect x="105.62" y="75.05" width="4.85" height="2.50"/><rect x="112.68" y="75.05" width="2.50" height="2.50"/><rect x="117.38" y="75.05" width="9.56" height="2.50"/><rect x="131.49" y="75.05" width="2.50" height="2.50"/><rect x="138.54" y="75.05" width="2.50" height="2.50"/><rect x="143.24" y="75.05" width="7.20" height="2.50"/><rect x="152.65" y="75.05" width="2.50" height="2.50"/><rect x="68.00" y="77.41" width="2.50" height="2.50"/><rect x="72.70" y="77.41" width="7.20" height="2.50"/><rect x="82.11" y="77.41" width="2.50" height="2.50"/><rect x="86.81" y="77.41" width="4.85" height="2.50"/><rect x="96.22" y="77.41" width="2.50" height="2.50"/><rect x="100.92" y="77.41" width="4.85" height="2.50"/><rect x="107.97" y="77.41" width="9.56" height="2.50"/><rect x="119.73" y="77.41" width="2.50" height="2.50"/><rect x="124.43" y="77.41" width="4.85" height="2.50"/><rect x="131.49" y="77.41" width="2.50" height="2.50"/><rect x="138.54" y="77.41" width="2.50" height="2.50"/><rect x="143.24" y="77.41" width="7.20" height="2.50"/><rect x="152.65" y="77.41" width="2.50" height="2.50"/><rect x="68.00" y="79.76" width="2.50" height="2.50"/><rect x="82.11" y="79.76" width="2.50" height="2.50"/><rect x="89.16" y="79.76" width="4.85" height="2.50"/><rect x="98.57" y="79.76" width="4.85" height="2.50"/><rect x="107.97" y="79.76" width="2.50" height="2.50"/><rect x="117.38" y="79.76" width="7.20" height="2.50"/><rect x="126.78" y="79.76" width="2.50" height="2.50"/><rect x="131.49" y="79.76" width="2.50" height="2.50"/><rect x="138.54" y="79.76" width="2.50" height="2.50"/><rect x="152.65" y="79.76" width="2.50" height="2.50"/><rect x="68.00" y="82.11" width="16.61" height="2.50"/><rect x="86.81" y="82.11" width="2.50" height="2.50"/><rect x="91.51" y="82.11" width="2.50" height="2.50"/><rect x="96.22" y="82.11" width="2.50" height="2.50"/><rect x="100.92" y="82.11" width="2.50" height="2.50"/><rect x="105.62" y="82.11" width="2.50" height="2.50"/><rect x="110.32" y="82.11" width="2.50" height="2.50"/><rect x="115.03" y="82.11" width="2.50" height="2.50"/><rect x="119.73" y="82.11" width="2.50" height="2.50"/><rect x="124.43" y="82.11" width="2.50" height="2.50"/><rect x="129.14" y="82.11" width="2.50" height="2.50"/><rect x="133.84" y="82.11" width="2.50" height="2.50"/><rect x="138.54" y="82.11" width="16.61" height="2.50"/><rect x="89.16" y="84.46" width="4.85" height="2.50"/><rect x="96.22" y="84.46" width="4.85" height="2.50"/><rect x="107.97" y="84.46" width="2.50" height="2.50"/><rect x="112.68" y="84.46" width="16.61" height="2.50"/><rect x="131.49" y="84.46" width="4.85" height="2.50"/><rect x="79.76" y="86.81" width="9.56" height="2.50"/><rect x="96.22" y="86.81" width="2.50" height="2.50"/><rect x="100.92" y="86.81" width="2.50" height="2.50"/><rect x="105.62" y="86.81" width="2.50" height="2.50"/><rect x="110.32" y="86.81" width="2.50" height="2.50"/><rect x="129.14" y="86.81" width="2.50" height="2.50"/><rect x="138.54" y="86.81" width="2.50" height="2.50"/><rect x="150.30" y="86.81" width="2.50" height="2.50"/><rect x="70.35" y="89.16" width="2.50" height="2.50"/><rect x="84.46" y="89.16" width="2.50" height="2.50"/><rect x="91.51" y="89.16" width="2.50" height="2.50"/><rect x="96.22" y="89.16" width="2.50" height="2.50"/><rect x="100.92" y="89.16" width="2.50" height="2.50"/><rect x="105.62" y="89.16" width="4.85" height="2.50"/><rect x="112.68" y="89.16" width="2.50" height="2.50"/><rect x="119.73" y="89.16" width="7.20" height="2.50"/><rect x="129.14" y="89.16" width="4.85" height="2.50"/><rect x="138.54" y="89.16" width="2.50" height="2.50"/><rect x="143.24" y="89.16" width="2.50" height="2.50"/><rect x="147.95" y="89.16" width="4.85" height="2.50"/><rect x="72.70" y="91.51" width="2.50" height="2.50"/><rect x="77.41" y="91.51" width="9.56" height="2.50"/><rect x="96.22" y="91.51" width="14.26" height="2.50"/><rect x="112.68" y="91.51" width="4.85" height="2.50"/><rect x="122.08" y="91.51" width="7.20" height="2.50"/><rect x="131.49" y="91.51" width="2.50" height="2.50"/><rect x="138.54" y="91.51" width="2.50" height="2.50"/><rect x="143.24" y="91.51" width="9.56" height="2.50"/><rect x="68.00" y="93.86" width="7.20" height="2.50"/><rect x="77.41" y="93.86" width="2.50" height="2.50"/><rect x="93.86" y="93.86" width="11.91" height="2.50"/><rect x="107.97" y="93.86" width="7.20" height="2.50"/><rect x="117.38" y="93.86" width="2.50" height="2.50"/><rect x="124.43" y="93.86" width="2.50" height="2.50"/><rect x="131.49" y="93.86" width="2.50" height="2.50"/><rect x="138.54" y="93.86" width="4.85" height="2.50"/><rect x="147.95" y="93.86" width="2.50" height="2.50"/><rect x="72.70" y="96.22" width="2.50" height="2.50"/><rect x="77.41" y="96.22" width="2.50" height="2.50"/><rect x="82.11" y="96.22" width="2.50" height="2.50"/><rect x="91.51" y="96.22" width="2.50" height="2.50"/><rect x="105.62" y="96.22" width="2.50" height="2.50"/><rect x="112.68" y="96.22" width="7.20" height="2.50"/><rect x="124.43" y="96.22" width="4.85" height="2.50"/><rect x="131.49" y="96.22" width="2.50" height="2.50"/><rect x="136.19" y="96.22" width="4.85" height="2.50"/><rect x="143.24" y="96.22" width="7.20" height="2.50"/><rect x="72.70" y="98.57" width="2.50" height="2.50"/><rect x="77.41" y="98.57" width="4.85" height="2.50"/><rect x="84.46" y="98.57" width="4.85" height="2.50"/><rect x="93.86" y="98.57" width="2.50" height="2.50"/><rect x="100.92" y="98.57" width="4.85" height="2.50"/><rect x="110.32" y="98.57" width="2.50" height="2.50"/><rect x="117.38" y="98.57" width="2.50" height="2.50"/><rect x="122.08" y="98.57" width="2.50" height="2.50"/><rect x="126.78" y="98.57" width="2.50" height="2.50"/><rect x="131.49" y="98.57" width="2.50" height="2.50"/><rect x="136.19" y="98.57" width="4.85" height="2.50"/><rect x="145.59" y="98.57" width="2.50" height="2.50"/><rect x="150.30" y="98.57" width="2.50" height="2.50"/><rect x="68.00" y="100.92" width="2.50" height="2.50"/><rect x="75.05" y="100.92" width="11.91" height="2.50"/><rect x="91.51" y="100.92" width="7.20" height="2.50"/><rect x="103.27" y="100.92" width="2.50" height="2.50"/><rect x="107.97" y="100.92" width="7.20" height="2.50"/><rect x="117.38" y="100.92" width="4.85" height="2.50"/><rect x="124.43" y="100.92" width="2.50" height="2.50"/><rect x="129.14" y="100.92" width="9.56" height="2.50"/><rect x="140.89" y="100.92" width="14.26" height="2.50"/><rect x="72.70" y="103.27" width="2.50" height="2.50"/><rect x="84.46" y="103.27" width="2.50" height="2.50"/><rect x="93.86" y="103.27" width="4.85" height="2.50"/><rect x="100.92" y="103.27" width="2.50" height="2.50"/><rect x="107.97" y="103.27" width="4.85" height="2.50"/><rect x="115.03" y="103.27" width="4.85" height="2.50"/><rect x="122.08" y="103.27" width="2.50" height="2.50"/><rect x="126.78" y="103.27" width="4.85" height="2.50"/><rect x="133.84" y="103.27" width="4.85" height="2.50"/><rect x="145.59" y="103.27" width="4.85" height="2.50"/><rect x="152.65" y="103.27" width="2.50" height="2.50"/><rect x="70.35" y="105.62" width="9.56" height="2.50"/><rect x="82.11" y="105.62" width="4.85" height="2.50"/><rect x="89.16" y="105.62" width="7.20" height="2.50"/><rect x="103.27" y="105.62" width="4.85" height="2.50"/><rect x="110.32" y="105.62" width="2.50" height="2.50"/><rect x="115.03" y="105.62" width="9.56" height="2.50"/><rect x="126.78" y="105.62" width="2.50" height="2.50"/><rect x="133.84" y="105.62" width="4.85" height="2.50"/><rect x="140.89" y="105.62" width="11.91" height="2.50"/><rect x="77.41" y="107.97" width="2.50" height="2.50"/><rect x="84.46" y="107.97" width="2.50" height="2.50"/><rect x="91.51" y="107.97" width="2.50" height="2.50"/><rect x="103.27" y="107.97" width="2.50" height="2.50"/><rect x="117.38" y="107.97" width="2.50" height="2.50"/><rect x="122.08" y="107.97" width="11.91" height="2.50"/><rect x="138.54" y="107.97" width="2.50" height="2.50"/><rect x="145.59" y="107.97" width="2.50" height="2.50"/><rect x="68.00" y="110.32" width="2.50" height="2.50"/><rect x="82.11" y="110.32" width="4.85" height="2.50"/><rect x="91.51" y="110.32" width="16.61" height="2.50"/><rect x="112.68" y="110.32" width="2.50" height="2.50"/><rect x="126.78" y="110.32" width="2.50" height="2.50"/><rect x="133.84" y="110.32" width="2.50" height="2.50"/><rect x="138.54" y="110.32" width="9.56" height="2.50"/><rect x="150.30" y="110.32" width="2.50" height="2.50"/><rect x="68.00" y="112.68" width="4.85" height="2.50"/><rect x="75.05" y="112.68" width="4.85" height="2.50"/><rect x="86.81" y="112.68" width="2.50" height="2.50"/><rect x="91.51" y="112.68" width="11.91" height="2.50"/><rect x="105.62" y="112.68" width="2.50" height="2.50"/><rect x="112.68" y="112.68" width="2.50" height="2.50"/><rect x="119.73" y="112.68" width="2.50" height="2.50"/><rect x="124.43" y="112.68" width="4.85" height="2.50"/><rect x="131.49" y="112.68" width="4.85" height="2.50"/><rect x="140.89" y="112.68" width="2.50" height="2.50"/><rect x="150.30" y="112.68" width="2.50" height="2.50"/><rect x="68.00" y="115.03" width="16.61" height="2.50"/><rect x="86.81" y="115.03" width="4.85" height="2.50"/><rect x="93.86" y="115.03" width="2.50" height="2.50"/><rect x="107.97" y="115.03" width="4.85" height="2.50"/><rect x="119.73" y="115.03" width="4.85" height="2.50"/><rect x="136.19" y="115.03" width="4.85" height="2.50"/><rect x="147.95" y="115.03" width="7.20" height="2.50"/><rect x="68.00" y="117.38" width="2.50" height="2.50"/><rect x="72.70" y="117.38" width="2.50" height="2.50"/><rect x="77.41" y="117.38" width="4.85" height="2.50"/><rect x="91.51" y="117.38" width="9.56" height="2.50"/><rect x="105.62" y="117.38" width="4.85" height="2.50"/><rect x="117.38" y="117.38" width="7.20" height="2.50"/><rect x="126.78" y="117.38" width="2.50" height="2.50"/><rect x="133.84" y="117.38" width="2.50" height="2.50"/><rect x="143.24" y="117.38" width="7.20" height="2.50"/><rect x="152.65" y="117.38" width="2.50" height="2.50"/><rect x="68.00" y="119.73" width="2.50" height="2.50"/><rect x="72.70" y="119.73" width="2.50" height="2.50"/><rect x="77.41" y="119.73" width="2.50" height="2.50"/><rect x="82.11" y="119.73" width="7.20" height="2.50"/><rect x="91.51" y="119.73" width="4.85" height="2.50"/><rect x="100.92" y="119.73" width="7.20" height="2.50"/><rect x="110.32" y="119.73" width="4.85" height="2.50"/><rect x="126.78" y="119.73" width="2.50" height="2.50"/><rect x="131.49" y="119.73" width="7.20" height="2.50"/><rect x="143.24" y="119.73" width="11.91" height="2.50"/><rect x="68.00" y="122.08" width="4.85" height="2.50"/><rect x="86.81" y="122.08" width="2.50" height="2.50"/><rect x="93.86" y="122.08" width="7.20" height="2.50"/><rect x="112.68" y="122.08" width="2.50" height="2.50"/><rect x="119.73" y="122.08" width="4.85" height="2.50"/><rect x="129.14" y="122.08" width="2.50" height="2.50"/><rect x="133.84" y="122.08" width="2.50" height="2.50"/><rect x="140.89" y="122.08" width="4.85" height="2.50"/><rect x="147.95" y="122.08" width="2.50" height="2.50"/><rect x="152.65" y="122.08" width="2.50" height="2.50"/><rect x="68.00" y="124.43" width="2.50" height="2.50"/><rect x="75.05" y="124.43" width="2.50" height="2.50"/><rect x="82.11" y="124.43" width="2.50" height="2.50"/><rect x="89.16" y="124.43" width="2.50" height="2.50"/><rect x="110.32" y="124.43" width="2.50" height="2.50"/><rect x="117.38" y="124.43" width="7.20" height="2.50"/><rect x="129.14" y="124.43" width="11.91" height="2.50"/><rect x="143.24" y="124.43" width="7.20" height="2.50"/><rect x="68.00" y="126.78" width="7.20" height="2.50"/><rect x="79.76" y="126.78" width="2.50" height="2.50"/><rect x="84.46" y="126.78" width="9.56" height="2.50"/><rect x="98.57" y="126.78" width="9.56" height="2.50"/><rect x="110.32" y="126.78" width="2.50" height="2.50"/><rect x="117.38" y="126.78" width="4.85" height="2.50"/><rect x="126.78" y="126.78" width="2.50" height="2.50"/><rect x="133.84" y="126.78" width="7.20" height="2.50"/><rect x="145.59" y="126.78" width="9.56" height="2.50"/><rect x="72.70" y="129.14" width="11.91" height="2.50"/><rect x="91.51" y="129.14" width="9.56" height="2.50"/><rect x="103.27" y="129.14" width="2.50" height="2.50"/><rect x="110.32" y="129.14" width="2.50" height="2.50"/><rect x="115.03" y="129.14" width="2.50" height="2.50"/><rect x="119.73" y="129.14" width="2.50" height="2.50"/><rect x="129.14" y="129.14" width="4.85" height="2.50"/><rect x="136.19" y="129.14" width="7.20" height="2.50"/><rect x="150.30" y="129.14" width="2.50" height="2.50"/><rect x="68.00" y="131.49" width="2.50" height="2.50"/><rect x="72.70" y="131.49" width="2.50" height="2.50"/><rect x="77.41" y="131.49" width="2.50" height="2.50"/><rect x="84.46" y="131.49" width="4.85" height="2.50"/><rect x="91.51" y="131.49" width="11.91" height="2.50"/><rect x="105.62" y="131.49" width="2.50" height="2.50"/><rect x="110.32" y="131.49" width="7.20" height="2.50"/><rect x="124.43" y="131.49" width="4.85" height="2.50"/><rect x="131.49" y="131.49" width="2.50" height="2.50"/><rect x="136.19" y="131.49" width="4.85" height="2.50"/><rect x="145.59" y="131.49" width="2.50" height="2.50"/><rect x="150.30" y="131.49" width="4.85" height="2.50"/><rect x="70.35" y="133.84" width="7.20" height="2.50"/><rect x="79.76" y="133.84" width="7.20" height="2.50"/><rect x="89.16" y="133.84" width="2.50" height="2.50"/><rect x="98.57" y="133.84" width="2.50" height="2.50"/><rect x="103.27" y="133.84" width="7.20" height="2.50"/><rect x="115.03" y="133.84" width="4.85" height="2.50"/><rect x="124.43" y="133.84" width="26.01" height="2.50"/><rect x="152.65" y="133.84" width="2.50" height="2.50"/><rect x="86.81" y="136.19" width="2.50" height="2.50"/><rect x="96.22" y="136.19" width="11.91" height="2.50"/><rect x="119.73" y="136.19" width="7.20" height="2.50"/><rect x="129.14" y="136.19" width="7.20" height="2.50"/><rect x="143.24" y="136.19" width="4.85" height="2.50"/><rect x="68.00" y="138.54" width="16.61" height="2.50"/><rect x="86.81" y="138.54" width="2.50" height="2.50"/><rect x="96.22" y="138.54" width="7.20" height="2.50"/><rect x="107.97" y="138.54" width="2.50" height="2.50"/><rect x="115.03" y="138.54" width="2.50" height="2.50"/><rect x="122.08" y="138.54" width="7.20" height="2.50"/><rect x="133.84" y="138.54" width="2.50" height="2.50"/><rect x="138.54" y="138.54" width="2.50" height="2.50"/><rect x="143.24" y="138.54" width="4.85" height="2.50"/><rect x="150.30" y="138.54" width="4.85" height="2.50"/><rect x="68.00" y="140.89" width="2.50" height="2.50"/><rect x="82.11" y="140.89" width="2.50" height="2.50"/><rect x="86.81" y="140.89" width="2.50" height="2.50"/><rect x="91.51" y="140.89" width="2.50" height="2.50"/><rect x="103.27" y="140.89" width="2.50" height="2.50"/><rect x="115.03" y="140.89" width="2.50" height="2.50"/><rect x="119.73" y="140.89" width="2.50" height="2.50"/><rect x="124.43" y="140.89" width="2.50" height="2.50"/><rect x="131.49" y="140.89" width="4.85" height="2.50"/><rect x="143.24" y="140.89" width="2.50" height="2.50"/><rect x="147.95" y="140.89" width="7.20" height="2.50"/><rect x="68.00" y="143.24" width="2.50" height="2.50"/><rect x="72.70" y="143.24" width="7.20" height="2.50"/><rect x="82.11" y="143.24" width="2.50" height="2.50"/><rect x="93.86" y="143.24" width="2.50" height="2.50"/><rect x="100.92" y="143.24" width="2.50" height="2.50"/><rect x="107.97" y="143.24" width="11.91" height="2.50"/><rect x="122.08" y="143.24" width="7.20" height="2.50"/><rect x="131.49" y="143.24" width="14.26" height="2.50"/><rect x="147.95" y="143.24" width="2.50" height="2.50"/><rect x="152.65" y="143.24" width="2.50" height="2.50"/><rect x="68.00" y="145.59" width="2.50" height="2.50"/><rect x="72.70" y="145.59" width="7.20" height="2.50"/><rect x="82.11" y="145.59" width="2.50" height="2.50"/><rect x="91.51" y="145.59" width="4.85" height="2.50"/><rect x="105.62" y="145.59" width="2.50" height="2.50"/><rect x="115.03" y="145.59" width="4.85" height="2.50"/><rect x="124.43" y="145.59" width="7.20" height="2.50"/><rect x="133.84" y="145.59" width="4.85" height="2.50"/><rect x="150.30" y="145.59" width="2.50" height="2.50"/><rect x="68.00" y="147.95" width="2.50" height="2.50"/><rect x="72.70" y="147.95" width="7.20" height="2.50"/><rect x="82.11" y="147.95" width="2.50" height="2.50"/><rect x="86.81" y="147.95" width="14.26" height="2.50"/><rect x="103.27" y="147.95" width="14.26" height="2.50"/><rect x="126.78" y="147.95" width="2.50" height="2.50"/><rect x="131.49" y="147.95" width="2.50" height="2.50"/><rect x="140.89" y="147.95" width="2.50" height="2.50"/><rect x="145.59" y="147.95" width="2.50" height="2.50"/><rect x="152.65" y="147.95" width="2.50" height="2.50"/><rect x="68.00" y="150.30" width="2.50" height="2.50"/><rect x="82.11" y="150.30" width="2.50" height="2.50"/><rect x="86.81" y="150.30" width="9.56" height="2.50"/><rect x="100.92" y="150.30" width="4.85" height="2.50"/><rect x="107.97" y="150.30" width="4.85" height="2.50"/><rect x="115.03" y="150.30" width="4.85" height="2.50"/><rect x="124.43" y="150.30" width="7.20" height="2.50"/><rect x="136.19" y="150.30" width="2.50" height="2.50"/><rect x="140.89" y="150.30" width="7.20" height="2.50"/><rect x="152.65" y="150.30" width="2.50" height="2.50"/><rect x="68.00" y="152.65" width="16.61" height="2.50"/><rect x="89.16" y="152.65" width="2.50" height="2.50"/><rect x="93.86" y="152.65" width="4.85" height="2.50"/><rect x="100.92" y="152.65" width="2.50" height="2.50"/><rect x="110.32" y="152.65" width="2.50" height="2.50"/><rect x="117.38" y="152.65" width="9.56" height="2.50"/><rect x="129.14" y="152.65" width="7.20" height="2.50"/><rect x="140.89" y="152.65" width="2.50" height="2.50"/><rect x="150.30" y="152.65" width="4.85" height="2.50"/></g></svg>
</body></html>
